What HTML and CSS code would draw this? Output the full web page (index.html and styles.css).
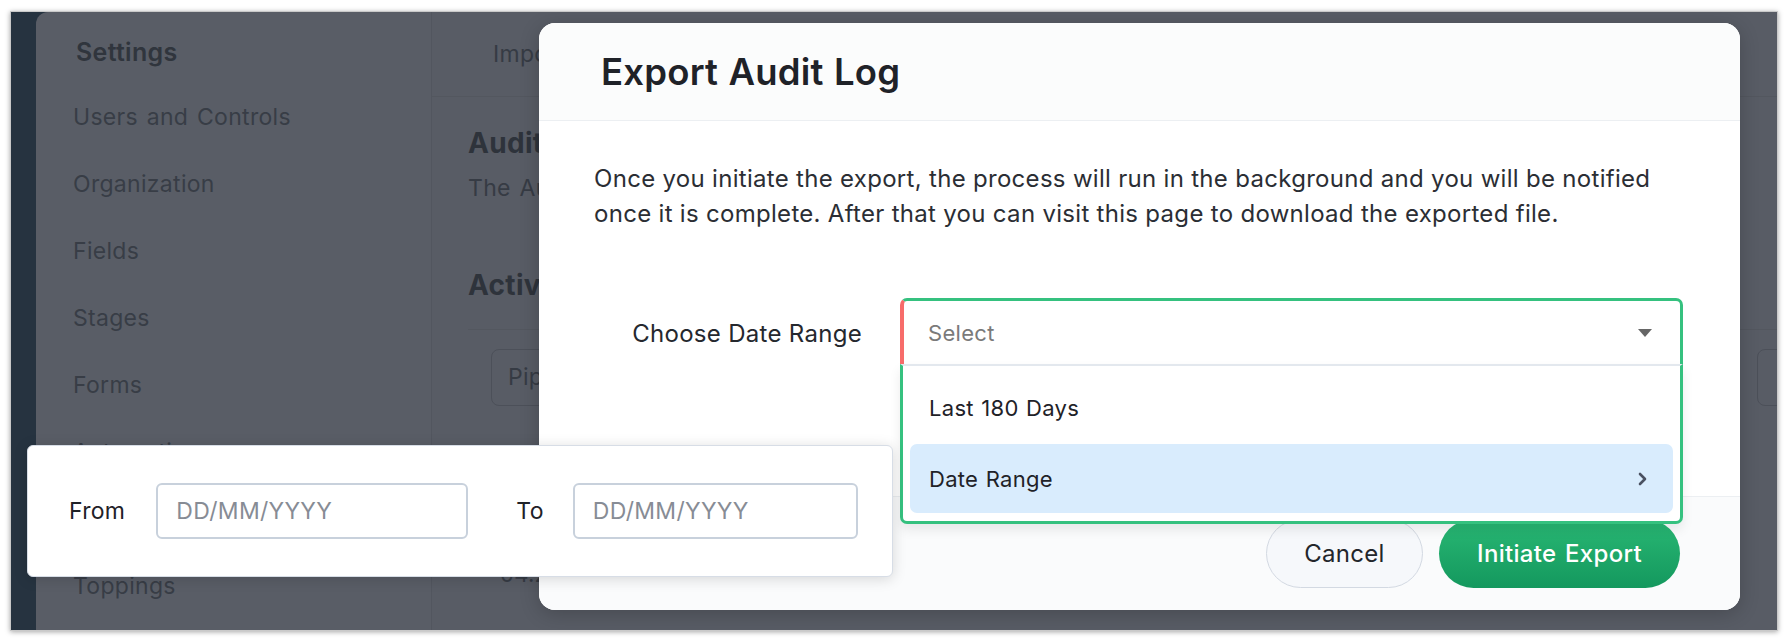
FILE: index.html
```html
<!DOCTYPE html>
<html lang="en">
  <head>
    <meta charset="UTF-8" />
    <meta name="viewport" content="width=device-width, initial-scale=1.0" />
    <title>Export Audit Log</title>
    <link rel="stylesheet" href="styles.css">
  </head>
  <body>
    <div class="frame">
      <div class="strip"></div>

      <aside class="sidebar">
        <h2 class="sidebar-title">Settings</h2>
        <ul class="nav">
          <li>Users and Controls</li>
          <li>Organization</li>
          <li>Fields</li>
          <li>Stages</li>
          <li>Forms</li>
          <li>Automation</li>
          <li>Templates</li>
          <li>Toppings</li>
        </ul>
      </aside>

      <main class="main">
        <div class="tabs">
          <span class="tab">Import History</span>
        </div>
        <div class="content">
          <h3 class="page-title">Audit Log</h3>
          <p class="page-desc">The Audit Log lets you track the activities in your organization.</p>
          <h3 class="section-title">Activities</h3>
          <div class="filters">
            <div class="filter">Pipeline</div>
            <div class="filter filter-right"></div>
          </div>
          <div class="log-row">04.23 PM</div>
        </div>
      </main>

      <!-- modal -->
      <div class="modal">
        <div class="modal-header">
          <h1 class="modal-title">Export Audit Log</h1>
        </div>
        <div class="modal-body">
          <p class="modal-text">Once you initiate the export, the process will run in the background and you will be notified once it is complete. After that you can visit this page to download the exported file.</p>
          <div class="form-row">
            <label class="form-label">Choose Date Range</label>
            <div class="select">
              <div class="select-head">
                <span class="select-placeholder">Select</span>
                <span class="caret"></span>
              </div>
              <ul class="select-menu">
                <li class="option">Last 180 Days</li>
                <li class="option option-active">
                  Date Range
                  <svg class="chevron" width="9" height="14" viewBox="0 0 9 14">
                    <polyline points="2,2 7,7 2,12" fill="none" stroke="#4a5161" stroke-width="2.6" stroke-linecap="round" stroke-linejoin="round" />
                  </svg>
                </li>
              </ul>
            </div>
          </div>
        </div>
        <div class="modal-footer">
          <button class="btn btn-cancel">Cancel</button>
          <button class="btn btn-primary">Initiate Export</button>
        </div>
      </div>

      <!-- date range popup -->
      <div class="range-popup">
        <label class="range-label">From</label>
        <input class="range-input range-from" type="text" placeholder="DD/MM/YYYY" />
        <label class="range-label range-label-to">To</label>
        <input class="range-input range-to" type="text" placeholder="DD/MM/YYYY" />
      </div>
    </div>
  </body>
</html>
```

FILE: styles.css
```css
* {
  box-sizing: border-box;
}

body {
  font-family: Inter, "Noto Sans", sans-serif;
  letter-spacing: 0.3px;
  word-spacing: 2px;
  margin: 0;
  width: 1788px;
  height: 642px;
  background-color: #fff;
  overflow: hidden;
}

.frame {
  position: relative;
  display: flex;
  margin: 11px 10px 0 10px;
  width: 1768px;
  height: 620px;
  border: 1px solid #c9c9c9;
  box-shadow: 0 1px 5px rgba(0, 0, 0, 0.35);
  background-color: #263340;
  overflow: hidden;
}

.strip {
  width: 25px;
  flex-shrink: 0;
  background-color: #263340;
}

/* sidebar */
.sidebar {
  width: 395px;
  flex-shrink: 0;
  background-color: #595d66;
  border-top-left-radius: 12px;
  padding-top: 8px;
}

.sidebar-title {
  margin: 0;
  height: 64px;
  line-height: 64px;
  padding-left: 40px;
  font-size: 25px;
  font-weight: 600;
  color: #30353d;
}

.nav {
  list-style: none;
  margin: 0;
  padding: 0;
}

.nav li {
  height: 67px;
  line-height: 67px;
  padding-left: 37px;
  font-size: 23px;
  color: #383d46;
}

/* main area behind modal */
.main {
  flex: 1;
  background-color: #585c65;
  border-left: 1px solid #52565f;
}

.tabs {
  height: 85px;
  border-bottom: 1px solid #53575f;
  padding-left: 61px;
  display: flex;
  align-items: center;
}

.tab {
  font-size: 23px;
  color: #363b44;
}

.content {
  padding-left: 36px;
}

.page-title {
  margin: 31px 0 0 0;
  font-size: 28px;
  line-height: 30px;
  font-weight: 700;
  color: #2e333b;
}

.page-desc {
  margin: 15px 0 0 0;
  font-size: 23px;
  line-height: 30px;
  color: #363b44;
}

.section-title {
  margin: 67px 0 0 0;
  padding-bottom: 29px;
  border-bottom: 1px solid #53575f;
  font-size: 28px;
  line-height: 30px;
  font-weight: 700;
  color: #2e333b;
}

.filters {
  display: flex;
  justify-content: space-between;
  margin-top: 19px;
  padding-left: 23px;
}

.filter {
  width: 200px;
  height: 57px;
  border: 1.5px solid #4c5059;
  border-radius: 8px;
  padding-left: 16px;
  line-height: 54px;
  font-size: 23px;
  color: #363b44;
}

.filter-right {
  width: 60px;
  margin-right: -40px;
}

.log-row {
  margin-top: 155px;
  padding-left: 32px;
  font-size: 22px;
  color: #363b44;
}

/* modal */
.modal {
  position: absolute;
  left: 528px;
  top: 11px;
  width: 1201px;
  height: 587px;
  background-color: #fff;
  border-radius: 16px;
  box-shadow: 0 4px 20px rgba(0, 0, 0, 0.2);
  display: flex;
  flex-direction: column;
}

.modal-header {
  height: 98px;
  flex-shrink: 0;
  background-color: #fbfcfc;
  border-bottom: 1px solid #eceff2;
  border-radius: 16px 16px 0 0;
  padding-left: 62px;
  display: flex;
  align-items: center;
}

.modal-title {
  margin: 0;
  font-size: 36.5px;
  font-weight: 600;
  letter-spacing: 0.2px;
  word-spacing: 1px;
  color: #1f2228;
}

.modal-body {
  flex: 1;
  padding: 40px 40px 0 55px;
}

.modal-text {
  margin: 0;
  font-size: 24px;
  line-height: 35px;
  word-spacing: 0;
  color: #2b2e34;
}

.form-row {
  display: flex;
  align-items: flex-start;
  gap: 38px;
  margin-top: 67px;
}

.form-label {
  width: 268px;
  flex-shrink: 0;
  text-align: right;
  padding-top: 3px;
  font-size: 24px;
  line-height: 66px;
  word-spacing: 0;
  color: #25282e;
}

.select {
  position: relative;
  width: 783px;
  z-index: 2;
}

.select-head {
  height: 66px;
  background-color: #fff;
  border: 3px solid #35c17f;
  border-left: 4px solid #f76c6a;
  border-bottom: none;
  border-radius: 7px 7px 0 0;
  display: flex;
  align-items: center;
  justify-content: space-between;
  padding: 0 28px 0 24px;
}

.select-placeholder {
  font-size: 22px;
  color: #7a7a7a;
}

.caret {
  width: 0;
  height: 0;
  border-left: 7px solid transparent;
  border-right: 7px solid transparent;
  border-top: 8px solid #666;
}

.select-menu {
  position: absolute;
  top: 100%;
  left: 0;
  right: 0;
  list-style: none;
  margin: 0;
  padding: 0 7px 8px 7px;
  background-color: #fff;
  border: 3px solid #35c17f;
  border-top: 2px solid #e3e8ee;
  border-radius: 0 0 7px 7px;
  box-shadow: 0 6px 12px rgba(0, 0, 0, 0.08);
}

.option {
  height: 78px;
  display: flex;
  align-items: center;
  justify-content: space-between;
  padding: 5px 26px 0 19px;
  font-size: 22px;
  word-spacing: 1px;
  color: #1f2228;
}

.option-active {
  height: 69px;
  padding-top: 0;
  background-color: #d9ecfd;
  border-radius: 7px;
}

.chevron {
  display: block;
}

.modal-footer {
  height: 114px;
  flex-shrink: 0;
  background-color: #fafbfc;
  border-top: 1px solid #eceff2;
  border-radius: 0 0 16px 16px;
  display: flex;
  justify-content: flex-end;
  align-items: center;
  gap: 16px;
  padding-right: 60px;
}

.btn {
  height: 69px;
  border-radius: 35px;
  font-family: inherit;
  font-size: 24px;
  letter-spacing: 0.3px;
  word-spacing: 2px;
  cursor: pointer;
}

.btn-cancel {
  width: 157px;
  background-color: #f6f8fb;
  border: 1.5px solid #d3d9e2;
  color: #23262b;
}

.btn-primary {
  width: 241px;
  border: none;
  background: linear-gradient(#29b874, #14985e);
  color: #fff;
  font-weight: 500;
}

/* date range popup */
.range-popup {
  position: absolute;
  left: 16px;
  top: 433px;
  width: 866px;
  height: 132px;
  background-color: #fff;
  border: 1px solid #d7dde6;
  border-radius: 6px;
  box-shadow: 0 2px 14px rgba(0, 0, 0, 0.15);
  display: flex;
  align-items: center;
  padding-left: 41px;
  z-index: 3;
}

.range-label {
  font-size: 23px;
  color: #1f2228;
}

.range-input {
  height: 56px;
  border: 2px solid #c8d1dc;
  border-radius: 6px;
  padding: 0 0 0 18px;
  font-family: inherit;
  font-size: 23px;
  letter-spacing: 0.3px;
  color: #222;
}

.range-input::placeholder {
  color: #878c95;
}

.range-from {
  width: 312px;
  margin-left: 31px;
}

.range-label-to {
  margin-left: 48px;
}

.range-to {
  width: 285px;
  margin-left: 29px;
}
```
